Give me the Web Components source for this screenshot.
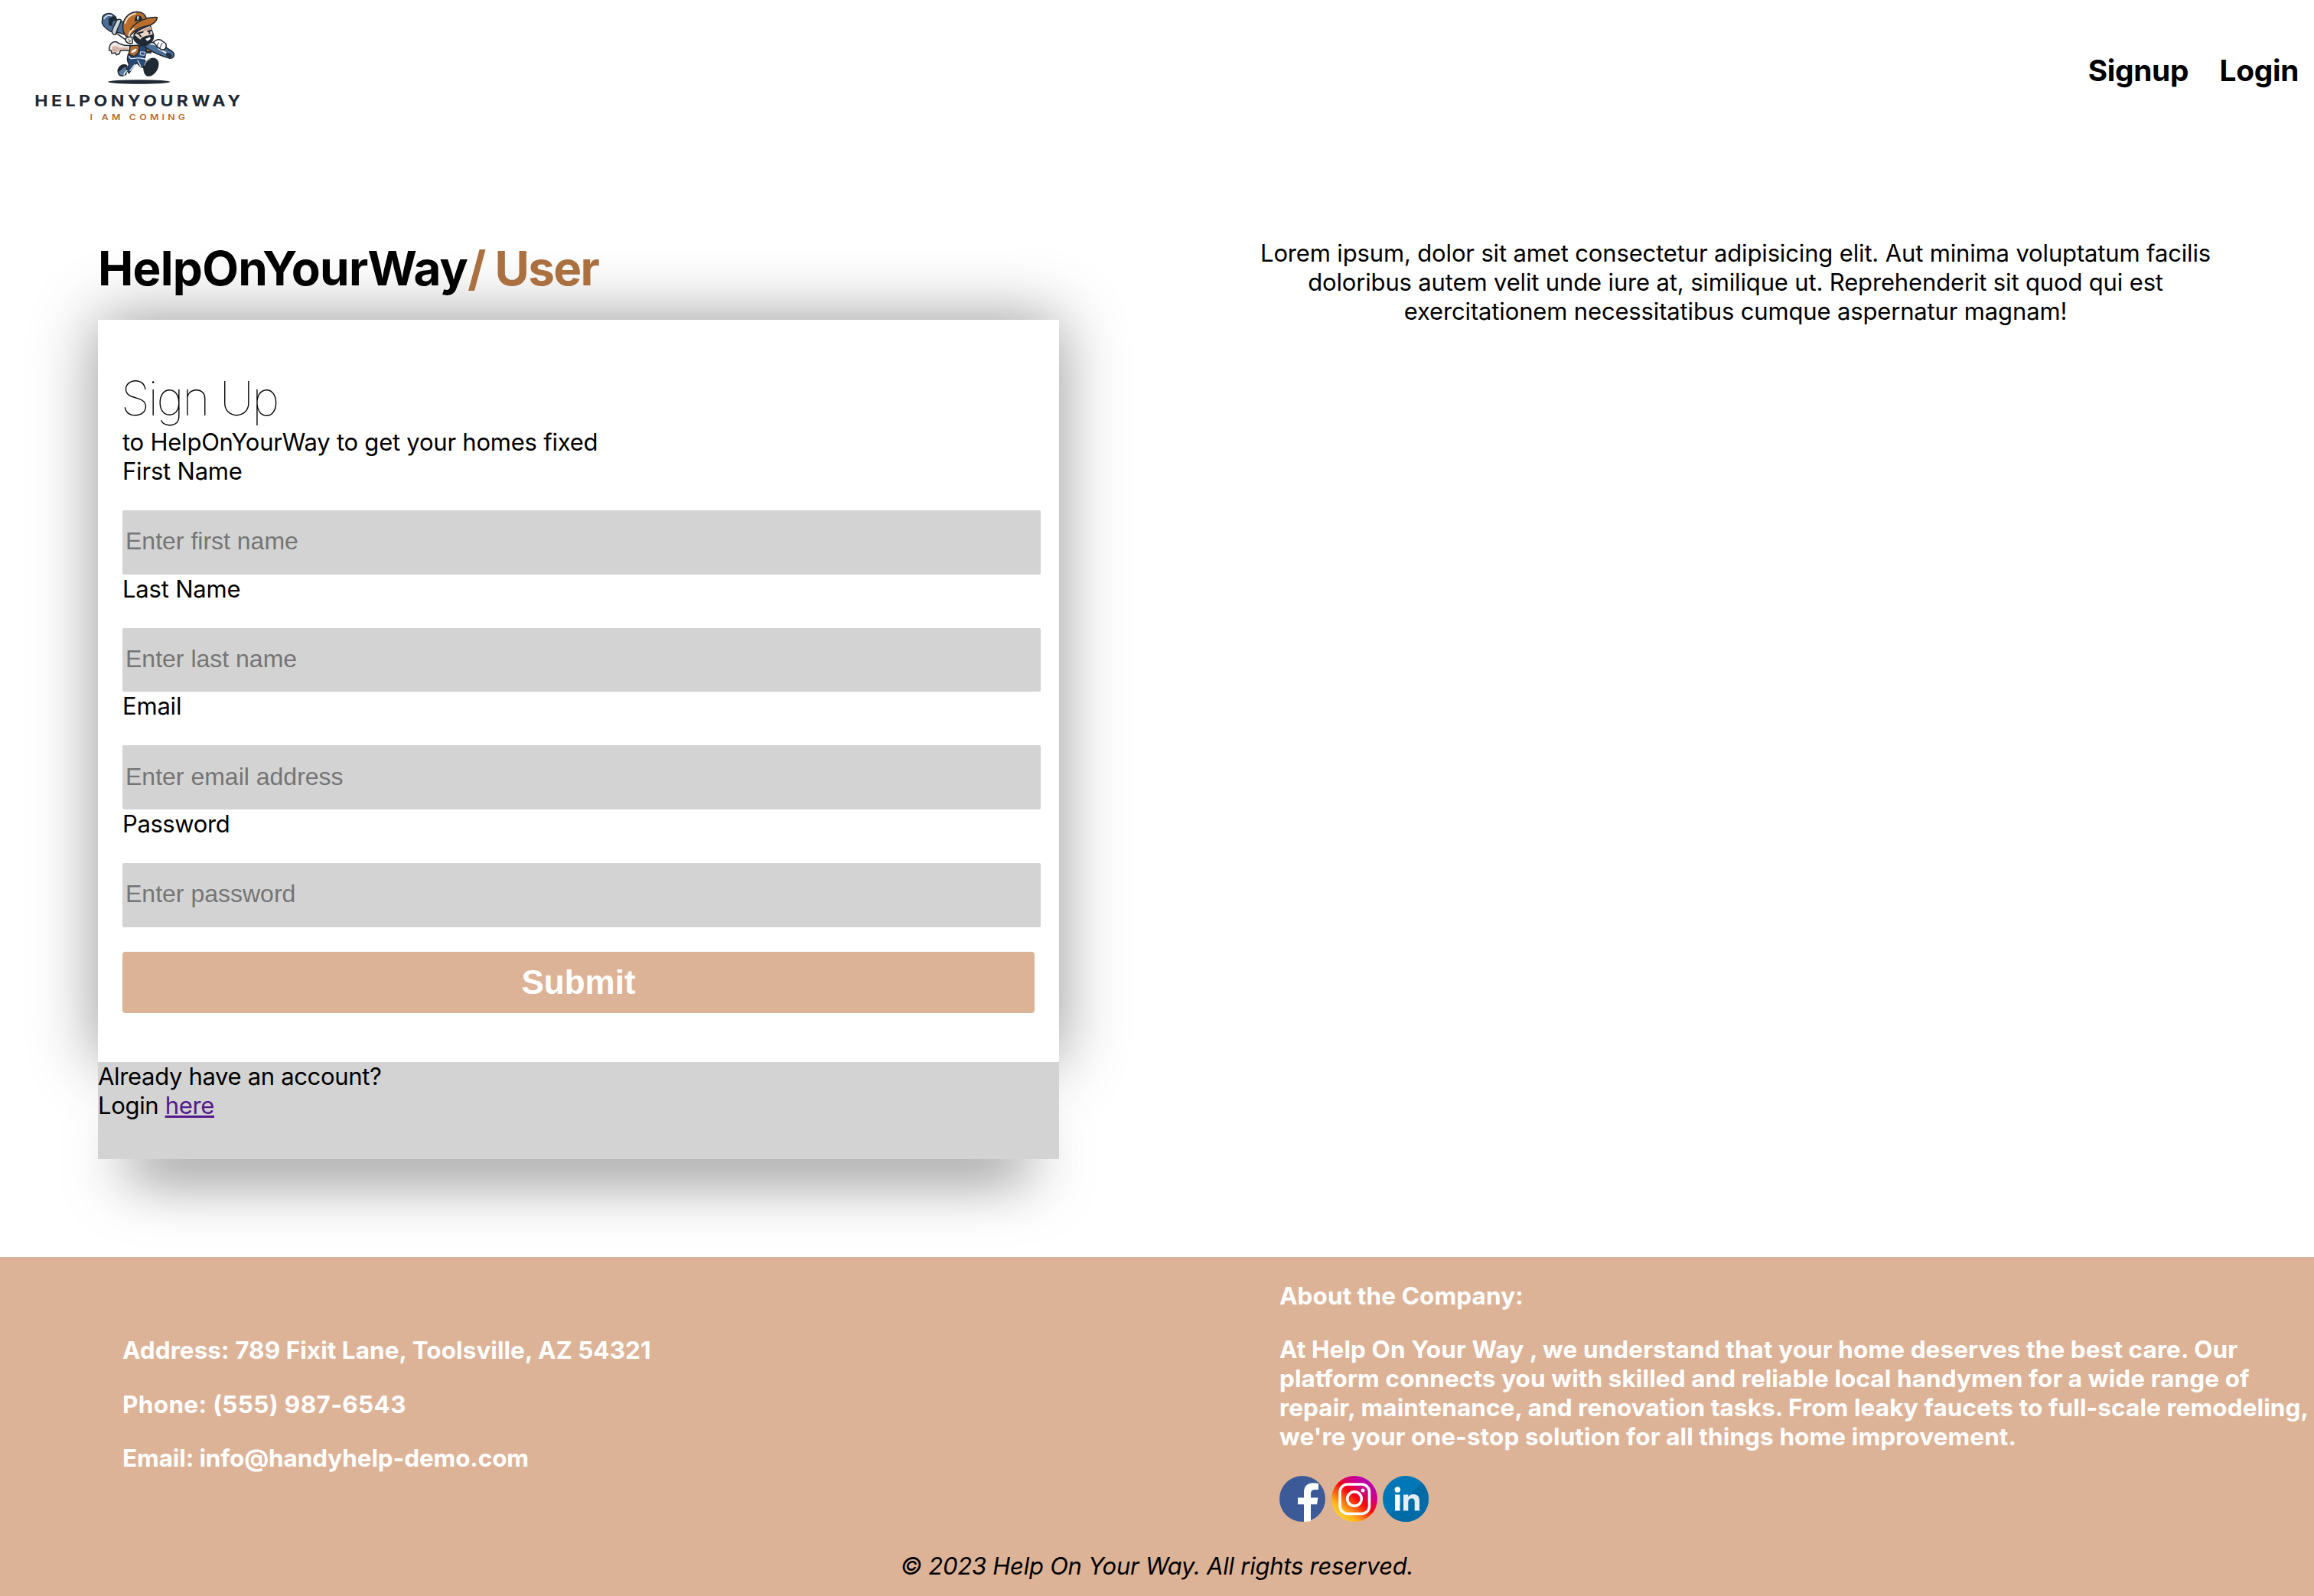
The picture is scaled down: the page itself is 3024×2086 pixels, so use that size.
<!DOCTYPE html>
<html lang="en">
<head>
<meta charset="utf-8">
<title>HelpOnYourWay</title>
<style>
body { margin: 0; background: #fff; color: #000; font-family: Inter, "Liberation Sans", sans-serif; font-size: 31px; line-height: 38.4px; letter-spacing: -0.2px; }
</style>
</head>
<body>
<how-page></how-page>
<script>
const define = (name, html, init) => customElements.define(name, class extends HTMLElement {
  connectedCallback() {
    if (this.shadowRoot) return;
    this.attachShadow({ mode: 'open' }).innerHTML = html;
    if (init) init.call(this, this.shadowRoot);
  }
});

define('brand-logo', `
<style>:host{display:block;width:320px;height:180px}svg{display:block}</style>
<svg width="320" height="180" viewBox="0 0 960 540" role="img">
  <ellipse cx="485" cy="321" rx="122" ry="8" fill="#1f2933"/>
  <g transform="translate(300 15)" stroke="#1f2933" stroke-width="4.5" stroke-linejoin="round" stroke-linecap="round">
    <path d="M92 112L134 142L143 128L108 98Z" fill="#fff"/>
    <path d="M84 90L108 66L152 84L136 122L96 110Z" fill="#4a6e96"/>
    <path d="M42 52C48 38 66 34 82 42L94 52L98 66L90 88L82 112C66 106 46 92 40 74Z" fill="#4a6e96"/>
    <path d="M48 58C54 46 68 42 78 47" fill="none" stroke="#dde5ee" stroke-width="5"/>
    <path d="M66 84L66 58L84 48L94 54L96 64L82 68L80 88Z" fill="#1f2933" stroke="none"/>
    <path d="M80 112C76 104 88 84 96 68C100 58 114 60 115 66C112 78 98 100 94 120C90 124 80 120 80 112Z" fill="#c9d3dc"/>
    <path d="M152 163C132 166 112 160 96 149C80 146 68 158 68 182L76 184L78 194L92 192L96 200L108 196L112 184C124 180 138 184 150 184Z" fill="#f3e8e2"/>
    <path d="M80 170C86 162 102 168 108 172L142 172L142 180L112 180L98 190L78 186Z" fill="#d3b3a4" stroke="none"/>
    <path d="M184 166L214 158L232 192L212 192L206 220L216 240C204 256 190 250 178 232L166 240L146 272L138 262L146 236C136 224 138 200 148 190Z" fill="#264a78"/>
    <path d="M146 206C148 220 164 214 184 212L208 216M180 222L192 246M168 238L150 262" fill="none" stroke="#e6ebf1" stroke-width="4"/>
    <path d="M150 164L184 162C190 180 182 200 164 206L146 198Z" fill="#b66a2d"/>
    <path d="M154 192C156 180 172 172 176 178C174 188 164 192 154 192Z" fill="#fff" stroke="none"/>
    <path d="M212 168L230 174L234 188L214 188Z" fill="#b66a2d"/>
    <path d="M192 188L210 190L206 202L190 200Z" fill="#264a78" stroke="#e6ebf1" stroke-width="3"/>
    <path d="M138 246C118 230 98 252 104 272C108 284 126 286 134 276Z" fill="#5b7c9e"/>
    <path d="M138 240C120 230 104 246 104 266C112 268 122 244 140 248Z" fill="#1f2933" stroke="none"/>
    <path d="M126 280C126 270 134 266 138 262" fill="none" stroke="#eef1f4"/>
    <path d="M204 256C200 240 212 222 232 215C250 210 262 222 260 240C258 262 238 284 220 282C208 280 206 268 204 256Z" fill="#1f2933"/>
    <path d="M206 240C210 228 218 220 228 216" fill="none" stroke="#8b98a6" stroke-width="5"/>
    <path d="M198 158C230 148 250 150 276 162L314 186C328 196 324 214 306 214C284 208 224 188 198 158Z" fill="#4a6e96"/>
    <path d="M222 157C238 156 252 160 262 170M262 176L290 192" fill="none" stroke="#eef2f7" stroke-width="6"/>
    <ellipse cx="302" cy="201" rx="10" ry="5" transform="rotate(28 302 201)" fill="#22395a"/>
    <path d="M242 150C250 140 268 136 276 146L290 156C294 166 290 180 278 180C270 182 264 172 256 168Z" fill="#fff"/>
    <path d="M262 152L256 164M276 154L266 174" fill="none" stroke-width="3"/>
    <path d="M166 118L172 106L228 82L238 112C246 130 242 156 206 164C186 164 168 150 164 136Z" fill="#1f2933"/>
    <path d="M168 122C180 104 206 96 226 86C234 94 238 110 238 120L222 124C210 126 200 128 190 140L182 134Z" fill="#ecd6c8" stroke="none"/>
    <path d="M196 104C212 96 224 90 230 90L232 110L216 104L200 108Z" fill="#cda48e" stroke="none"/>
    <path d="M178 116L200 110M186 120L192 128M220 108L234 104M226 112L226 116" fill="none" stroke-width="6"/>
    <path d="M210 138L228 130L230 138L218 146Z" fill="#fff" stroke="none"/>
    <path d="M158 130C144 128 130 132 132 142C134 154 150 158 160 154Z" fill="#f3e8e2"/>
    <path d="M144 140L152 146L146 150" fill="none" stroke-width="3"/>
    <path d="M133 126C120 110 118 84 126 66C138 40 162 28 186 32C200 34 210 44 214 56C228 56 242 50 256 53C256 68 236 86 210 88C186 92 168 104 156 120L142 130Z" fill="#bb6d2b"/>
    <path d="M130 76C136 56 150 42 170 38M146 126C146 116 154 104 164 98" fill="none" stroke="#f4e3cc" stroke-width="6"/>
    <path d="M152 100C160 84 184 66 214 58" fill="none" stroke="#1f2933" stroke-width="4"/>
    <path d="M168 70C166 50 180 40 186 46C196 50 200 58 196 64Z" fill="#1f2933" stroke="none"/>
    <path d="M180 64C174 54 180 46 183 46C184 54 184 60 180 64Z" fill="#fff" stroke="none"/>
  </g>
  <g transform="scale(1.12 1)">
    <text x="67.500" y="416.500" font-family="Inter" font-weight="700" font-size="62" fill="#1f2933" textLength="720" lengthAdjust="spacing">HELPONYOURWAY</text>
    <text x="261.500" y="471" font-family="Inter" font-weight="600" font-size="33" fill="#b66a2d" textLength="333" lengthAdjust="spacing">I AM COMING</text>
  </g>
</svg>`);

define('site-nav', `
<style>
:host{display:flex;align-items:center;justify-content:space-between;height:187px;padding:0 20px;box-sizing:border-box}
brand-logo{align-self:flex-start}
nav{display:flex;gap:40.500px;margin-bottom:2.500px;font-size:38.800px;font-weight:700;line-height:48px;letter-spacing:-.3px}
a{color:#000;text-decoration:none}
</style>
<brand-logo></brand-logo>
<nav><a>Signup</a><a>Login</a></nav>`);

define('form-field', `
<style>
:host{display:flex;flex-direction:column;gap:31.600px}
input{box-sizing:border-box;width:1200px;height:83.660px;border:0;border-radius:2px;padding:0 4px 2px;margin:0;background:#d3d3d3;font:32px "Liberation Sans",Arial,sans-serif;letter-spacing:0}
input::placeholder{color:#757575;opacity:1}
</style>
<label><slot></slot></label><input>`, function (root) {
  root.querySelector('input').placeholder = this.getAttribute('hint');
});

define('signup-card', `
<style>
:host{display:block;width:1256px}
.card{background:#fff;padding:65px 32px 64px;box-shadow:0 0 80px rgba(0,0,0,.42)}
h2{margin:0 0 0 -2px;font-size:62px;font-weight:100;line-height:76px;letter-spacing:-2.400px}
.lead{letter-spacing:-.23px}
form-field:nth-of-type(4){letter-spacing:-.4px}
button{display:block;width:1192px;height:80.400px;margin:32px 0 0;padding:0;border:0;border-radius:4px;background:#ddb397;color:#fff;font:700 44px "Liberation Sans",Arial,sans-serif;letter-spacing:0}
.alt{height:127px;background:#d3d3d3;box-shadow:0 60px 80px -40px rgba(0,0,0,.6);letter-spacing:-.33px}
a{color:#551a8b;text-decoration:underline}
</style>
<div class="card">
  <h2>Sign Up</h2>
  <div class="lead">to HelpOnYourWay to get your homes fixed</div>
  <form-field hint="Enter first name">First Name</form-field>
  <form-field hint="Enter last name">Last Name</form-field>
  <form-field hint="Enter email address">Email</form-field>
  <form-field hint="Enter password">Password</form-field>
  <button>Submit</button>
</div>
<div class="alt">Already have an account?<br>Login <a href="#">here</a></div>`);

define('sign-main', `
<style>
:host{display:grid;grid-template-columns:1fr 1fr;padding-top:124.500px;padding-bottom:128px}
section{padding:0 128px}
h1{margin:0;padding:1px 0 29px;font-size:62px;line-height:76px;font-weight:700;letter-spacing:-.75px}
h1 span{color:#aa7040;letter-spacing:-1.700px}
p{margin:0;text-align:center;white-space:nowrap;letter-spacing:-.15px}
</style>
<section><h1>HelpOnYourWay<span>/ User</span></h1><signup-card></signup-card></section>
<section><p>Lorem ipsum, dolor sit amet consectetur adipisicing elit. Aut minima voluptatum facilis<br>doloribus autem velit unde iure at, similique ut. Reprehenderit sit quod qui est<br>exercitationem necessitatibus cumque aspernatur magnam!</p></section>`);

const ICONS = {
  facebook: `<circle cx="30" cy="30" r="30" fill="#3d5a98"/><path d="M32 60V37.300H24V28.600H32V22C32 13 37 9.300 44 9.300Q48 9.300 51 10V18H46.500Q41 18 41 23V28.600H50.300L49 37.300H41V59Q37 60 32 60Z" fill="#fff"/>`,
  instagram: `<defs><linearGradient id="g" x1=".15" y1=".9" x2=".8" y2=".12"><stop offset="0" stop-color="#ffd52a"/><stop offset=".2" stop-color="#ffb01e"/><stop offset=".42" stop-color="#ff4a0c"/><stop offset=".58" stop-color="#f5000f"/><stop offset=".78" stop-color="#d0007f"/><stop offset="1" stop-color="#b900b4"/></linearGradient></defs><circle cx="30" cy="30" r="30" fill="url(#g)"/><rect x="11" y="11" width="38.500" height="38.500" rx="10" fill="none" stroke="#fff" stroke-width="3.600"/><circle cx="30" cy="30" r="9.300" fill="none" stroke="#fff" stroke-width="3.600"/><circle cx="41" cy="19" r="2.500" fill="#fff"/>`,
  linkedin: `<circle cx="30" cy="30" r="30" fill="#0077b7"/><path d="M51.200 8.800A30 30 0 0 1 15 56L8.800 51.200Z" fill="#006ba5"/><circle cx="19.300" cy="18" r="3.700" fill="#fff"/><path d="M16 24.500H22.500V45.500H16Z" fill="#fff"/><path d="M27 24.500H33.300V27.400C35 25 37 23.900 40 23.900C46 23.900 48 27.500 48 33V45.500H41.700V34.500C41.700 31.500 41 29.600 38 29.600C35 29.600 33.300 31.500 33.300 34.500V45.500H27Z" fill="#e6ecf1"/>`
};
define('social-icon', `<style>:host{display:block;width:60px;height:60px}svg{display:block}</style><svg width="60" height="60" viewBox="0 0 60 60"></svg>`, function (root) {
  root.querySelector('svg').innerHTML = ICONS[this.getAttribute('name')];
});

define('site-footer', `
<style>
:host{display:block;box-sizing:border-box;height:443px;padding-top:32px;background:#ddb397}
.cols{display:grid;grid-template-columns:1512px 1fr;align-items:start;height:321px;color:#fff;font-weight:700;font-size:31.500px;letter-spacing:.095px}
.stack{display:flex;flex-direction:column;gap:31.700px;padding-left:160px;white-space:nowrap}
.contact{padding-top:71.500px;letter-spacing:.06px}
.contact :nth-child(2){letter-spacing:.35px}
.contact :nth-child(3){letter-spacing:-.12px}
.about{line-height:38.200px}
.social{display:flex;gap:7.500px}
.copy{margin-top:32px;text-align:center;font-style:italic;letter-spacing:-.24px}
</style>
<div class="cols">
  <div class="stack contact"><div>Address: 789 Fixit Lane, Toolsville, AZ 54321</div><div>Phone: (555) 987-6543</div><div>Email: info@handyhelp-demo.com</div></div>
  <div class="stack about"><div>About the Company:</div>
    <div>At Help On Your Way , we understand that your home deserves the best care. Our<br>platform connects you with skilled and reliable local handymen for a wide range of<br>repair, maintenance, and renovation tasks. From leaky faucets to full-scale remodeling,<br>we're your one-stop solution for all things home improvement.</div>
    <div class="social"><social-icon name="facebook"></social-icon><social-icon name="instagram"></social-icon><social-icon name="linkedin"></social-icon></div>
  </div>
</div>
<div class="copy">© 2023 Help On Your Way. All rights reserved.</div>`);

define('how-page', `<style>:host{display:flow-root;height:2086px;overflow:hidden}</style><site-nav></site-nav><sign-main></sign-main><site-footer></site-footer>`);
</script>
</body>
</html>
